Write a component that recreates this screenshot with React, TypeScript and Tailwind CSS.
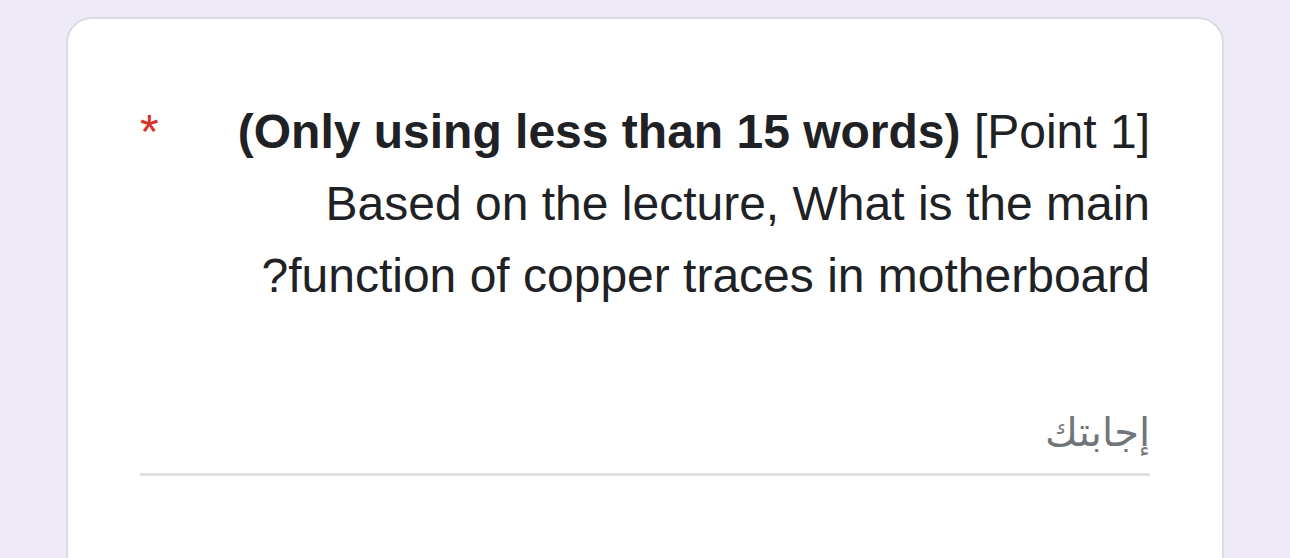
import React from "react";

export default function App() {
  return (
    <div className="min-h-[558px] w-full overflow-hidden bg-[#efeaf8] pt-[17px] font-['Liberation_Sans',Arial,sans-serif] text-[#202124]">
      <div
        dir="rtl"
        className="mx-[66px] rounded-[26px] border-2 border-[#dadce0] bg-white px-[72px] pt-[77px] pb-[120px]"
      >
        <div className="flex items-start gap-3">
          <div className="flex-1 text-[48px] leading-[72px]">
            <span dir="ltr">
              <span className="font-bold">(Only using less than 15 words)</span> [Point 1]
            </span>{" "}
            Based on the lecture, What is the main function of copper traces in motherboard?
          </div>
          <span className="shrink-0 text-[48px] leading-[72px] text-[#d93025]">*</span>
        </div>
        <div className="mt-[84px] border-b-[3px] border-[#e0e0e0] pb-[5px]">
          <div className="font-['DejaVu_Sans',sans-serif] text-[40px] leading-[72px] text-[#70757a]">
            إجابتك
          </div>
        </div>
      </div>
    </div>
  );
}
